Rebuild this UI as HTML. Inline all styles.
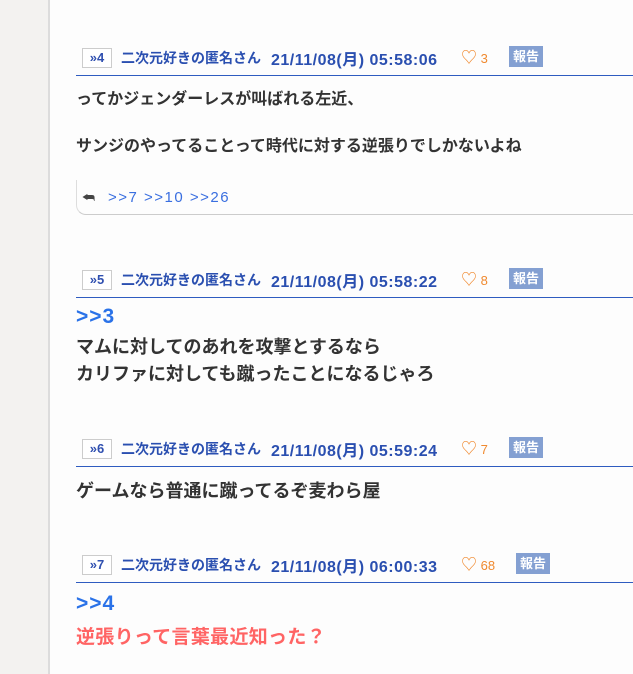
<!DOCTYPE html>
<html><head><meta charset="utf-8"><style>
body{margin:0;width:633px;height:674px;overflow:hidden;background:#fdfdfd;position:relative;font-family:"Liberation Sans","Noto Sans CJK JP",sans-serif}
.side{position:absolute;left:0;top:0;width:48px;height:674px;background:#f3f2f0;border-right:2px solid #dcdcdc}
.a{position:absolute;white-space:nowrap}
.num{position:absolute;width:28px;height:18px;border:1px solid #ccc;background:#fff;color:#3050b0;font-size:13px;font-weight:bold;text-align:center;line-height:18px}
.nm{font-size:14px;font-weight:bold;color:#2a4fb0}
.dt{font-size:16px;font-weight:bold;color:#2a4fb0;letter-spacing:0.5px}
.ht{font-size:13px;color:#f08a30}
.rp{position:absolute;width:34px;height:21px;background:#84a0d2;color:#fff;font-size:13px;font-weight:bold;text-align:center;line-height:21px}
.ln{position:absolute;left:76px;right:0;height:1px;background:#2f5cc0}
.t{font-size:16px;font-weight:bold;color:#333}
.t2{font-size:18px;font-weight:bold;color:#333}
.an{font-size:21px;font-weight:bold;color:#2a72e8;letter-spacing:1px}
</style></head><body>
<div class="side"></div>

<div class="num" style="left:82px;top:48px">»4</div>
<div class="a nm" style="left:121px;top:48px">二次元好きの匿名さん</div>
<div class="a dt" style="left:271px;top:46px">21/11/08(月) 05:58:06</div>
<div class="a ht" style="left:461px;top:44px"><span style="font-size:16px">♡</span> 3</div>
<div class="rp" style="left:509px;top:46px">報告</div>
<div class="ln" style="top:75px"></div>
<div class="a t" style="left:76px;top:85px">ってかジェンダーレスが叫ばれる左近、</div>
<div class="a t" style="left:76px;top:132px">サンジのやってることって時代に対する逆張りでしかないよね</div>
<div style="position:absolute;left:76px;top:180px;width:570px;height:34px;border-bottom:1px solid #ccc;border-left:1px solid #ddd;border-bottom-left-radius:10px"></div>
<div class="a" style="left:82px;top:189px;font-size:14px;color:#444">⮪</div>
<div class="a" style="left:108px;top:189px;font-size:15px;color:#3a6fe0;letter-spacing:1.5px">&gt;&gt;7 &gt;&gt;10 &gt;&gt;26</div>

<div class="num" style="left:82px;top:270px">»5</div>
<div class="a nm" style="left:121px;top:270px">二次元好きの匿名さん</div>
<div class="a dt" style="left:271px;top:268px">21/11/08(月) 05:58:22</div>
<div class="a ht" style="left:461px;top:266px"><span style="font-size:16px">♡</span> 8</div>
<div class="rp" style="left:509px;top:268px">報告</div>
<div class="ln" style="top:297px"></div>
<div class="a an" style="left:76px;top:305px">&gt;&gt;3</div>
<div class="a t2" style="left:76px;top:333px">マムに対してのあれを攻撃とするなら</div>
<div class="a t2" style="left:76px;top:360px">カリファに対しても蹴ったことになるじゃろ</div>

<div class="num" style="left:82px;top:439px">»6</div>
<div class="a nm" style="left:121px;top:439px">二次元好きの匿名さん</div>
<div class="a dt" style="left:271px;top:437px">21/11/08(月) 05:59:24</div>
<div class="a ht" style="left:461px;top:435px"><span style="font-size:16px">♡</span> 7</div>
<div class="rp" style="left:509px;top:437px">報告</div>
<div class="ln" style="top:466px"></div>
<div class="a t2" style="left:76px;top:477px">ゲームなら普通に蹴ってるぞ麦わら屋</div>

<div class="num" style="left:82px;top:555px">»7</div>
<div class="a nm" style="left:121px;top:555px">二次元好きの匿名さん</div>
<div class="a dt" style="left:271px;top:553px">21/11/08(月) 06:00:33</div>
<div class="a ht" style="left:461px;top:551px"><span style="font-size:16px">♡</span> 68</div>
<div class="rp" style="left:516px;top:553px">報告</div>
<div class="ln" style="top:582px"></div>
<div class="a an" style="left:76px;top:592px">&gt;&gt;4</div>
<div class="a" style="left:76px;top:622px;font-size:19px;font-weight:bold;color:#ff6464;letter-spacing:0.3px">逆張りって言葉最近知った？</div>
</body></html>
